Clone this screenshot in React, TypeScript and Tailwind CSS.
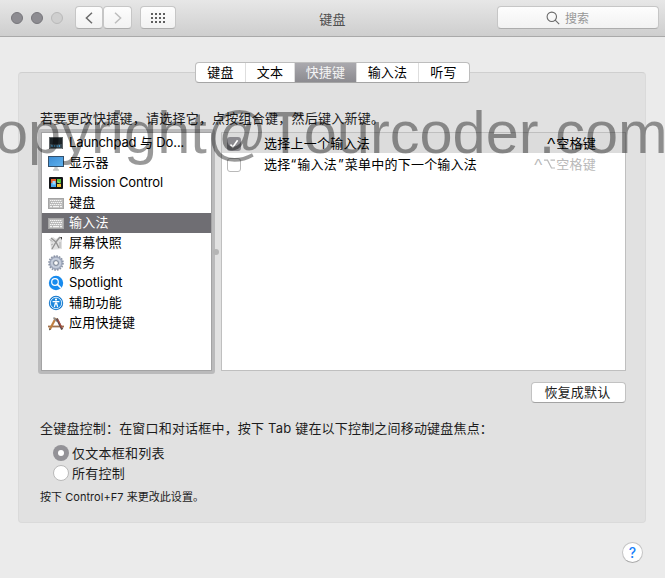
import React from "react";

function LaunchpadIcon() {
  return (
    <svg width="16" height="16" viewBox="0 0 16 16">
      <rect x="1.5" y="2.5" width="13" height="11" fill="#1d2428" stroke="#5c6164" strokeWidth="1" />
      <path d="M2 9h12v4H2z" fill="#37444c" />
      <path d="M3.5 11h9" stroke="#4fb4f0" strokeWidth="1.4" strokeDasharray="1.4 1" />
      <path d="M2 13.5h12" stroke="#8b8f91" />
    </svg>
  );
}

function DisplayIcon() {
  return (
    <svg width="16" height="16" viewBox="0 0 16 16">
      <defs>
        <linearGradient id="screen" x1="0" y1="0" x2="1" y2="1">
          <stop offset="0" stopColor="#3c8cd4" />
          <stop offset="1" stopColor="#5fb2ee" />
        </linearGradient>
      </defs>
      <rect x="0.5" y="1.5" width="15" height="10" fill="url(#screen)" stroke="#34506b" />
      <path d="M6.5 12h3l.5 2.5H6z" fill="#c9cccd" />
      <path d="M5 15h6" stroke="#a4a8aa" />
    </svg>
  );
}

function MissionIcon() {
  return (
    <svg width="16" height="16" viewBox="0 0 16 16">
      <rect x="1" y="2" width="14" height="12" rx="1" fill="#121417" />
      <rect x="3" y="4" width="5" height="4" fill="#e8602c" />
      <rect x="9" y="4" width="4" height="4" fill="#58c43a" />
      <rect x="3" y="8" width="5" height="4" fill="#48a9ee" />
      <rect x="4.5" y="6" width="3" height="3.5" fill="#9cd8fa" />
      <rect x="9" y="9" width="4" height="3" fill="#f2c230" />
      <path d="M10 6.5l2 2" stroke="#dfe9b6" />
    </svg>
  );
}

function KeyboardIcon() {
  return (
    <svg width="16" height="16" viewBox="0 0 16 16">
      <rect x="0.5" y="3.5" width="15" height="10" fill="#b9b9b9" stroke="#a6a6a6" />
      <path d="M2 5.5h12M3 7.5h11M2 9.5h12" stroke="#f4f4f4" strokeWidth="1.2" strokeDasharray="1.4 .6" />
      <path d="M2 11.7h2M5 11.7h6M12 11.7h2" stroke="#f4f4f4" strokeWidth="1.2" />
    </svg>
  );
}

function SnapshotIcon() {
  return (
    <svg width="16" height="16" viewBox="0 0 16 16">
      <path d="M2 4l3-2 3 2 3-2 3 1v11l-11 1z" fill="#e0e0e0" />
      <path d="M3 3l5 4 4-5M8 7l-4 7M8 7l3 6" fill="none" stroke="#939393" strokeWidth="1.4" />
      <path d="M12 2h2v3z" fill="#3b3b3b" />
      <path d="M1.5 4.5l3 2M3 10l2-1M12 7v6" stroke="#b0b0b0" />
    </svg>
  );
}

function GearIcon() {
  return (
    <svg width="16" height="16" viewBox="0 0 16 16">
      <circle cx="8" cy="8" r="7" fill="none" stroke="#8b95a6" strokeWidth="1.6" strokeDasharray="1.7 1.05" />
      <circle cx="8" cy="8" r="6.2" fill="#b3bdcf" stroke="#8089a0" strokeWidth=".8" />
      <circle cx="8" cy="8" r="4.2" fill="none" stroke="#d3d9e4" strokeWidth="1" />
      <circle cx="8" cy="8" r="2.4" fill="#fafafa" stroke="#6e7888" strokeWidth=".9" />
    </svg>
  );
}

function SpotlightIcon() {
  return (
    <svg width="16" height="16" viewBox="0 0 16 16">
      <circle cx="8" cy="8" r="7.2" fill="#188bee" />
      <circle cx="7" cy="7" r="3.3" fill="none" stroke="#fff" strokeWidth="1.2" />
      <path d="M9.4 9.4l3 3" stroke="#fff" strokeWidth="1.5" strokeLinecap="round" />
    </svg>
  );
}

function AccessibilityIcon() {
  return (
    <svg width="16" height="16" viewBox="0 0 16 16">
      <circle cx="8" cy="8" r="7.2" fill="#1377cc" />
      <circle cx="8" cy="8" r="5.7" fill="#1b86dc" stroke="#e9f5ff" strokeWidth=".9" />
      <circle cx="8" cy="4.6" r="1.1" fill="#fff" />
      <path d="M4.6 6.6h6.8M8 6.5v3M7.4 8l-1 4M8.6 8l1 4" stroke="#fff" strokeWidth="1.2" fill="none" />
    </svg>
  );
}

function AppsIcon() {
  return (
    <svg width="16" height="16" viewBox="0 0 16 16">
      <path d="M0 11.5h16" stroke="#a0714c" strokeWidth="1.8" />
      <path d="M1.8 14.5L7.8 3" stroke="#c08040" strokeWidth="2.2" />
      <path d="M5.5 2.5l3.5 4" stroke="#8b8e92" strokeWidth="1.6" />
      <path d="M8.8 3.5l5.4 11" stroke="#5b4a48" strokeWidth="2.2" />
      <path d="M9.8 4.5l4.3 8.5" stroke="#c9503f" strokeWidth=".9" />
      <path d="M1 15.5l.5-2 1.4.7z" fill="#3d3d3d" />
    </svg>
  );
}

const categories = [
  { label: "Launchpad 与 Do...", Icon: LaunchpadIcon, latin: true },
  { label: "显示器", Icon: DisplayIcon },
  { label: "Mission Control", Icon: MissionIcon, latin: true },
  { label: "键盘", Icon: KeyboardIcon },
  { label: "输入法", Icon: KeyboardIcon, selected: true },
  { label: "屏幕快照", Icon: SnapshotIcon },
  { label: "服务", Icon: GearIcon },
  { label: "Spotlight", Icon: SpotlightIcon, latin: true },
  { label: "辅助功能", Icon: AccessibilityIcon },
  { label: "应用快捷键", Icon: AppsIcon },
];

const tabs = [
  { label: "键盘", width: "w-[50px]" },
  { label: "文本", width: "w-[49px]" },
  { label: "快捷键", width: "w-[62px]", active: true },
  { label: "输入法", width: "w-[62px]" },
  { label: "听写", width: "w-[49px]" },
];

const toolButton =
  "flex h-[23px] items-center rounded-[4px] border border-[#c6c6c6] border-b-[#adadad] bg-linear-to-b from-[#fdfdfd] to-[#f2f2f2]";

function TitleBar() {
  return (
    <header className="flex h-[37px] items-start border-b border-[#a9a9a9] bg-linear-to-b from-[#e7e7e7] to-[#cecece] pt-[6px]">
      <div className="flex gap-2 pt-[6px] pl-[11px]">
        <span className="size-3 rounded-full border border-[#77767b] bg-[#8d8c91]" />
        <span className="size-3 rounded-full border border-[#77767b] bg-[#8d8c91]" />
        <span className="size-3 rounded-full border border-[#b9b9b9] bg-[#cfcfcf]" />
      </div>
      <div className="ml-3 flex">
        <span className={`${toolButton} w-[28px] justify-center`}>
          <svg width="8" height="12" viewBox="0 0 8 12" fill="none" stroke="#6b6b6b" strokeWidth="1.5">
            <path d="M7 .7L1.4 6 7 11.3" />
          </svg>
        </span>
        <span className={`${toolButton} w-[29px] justify-center`}>
          <svg width="8" height="12" viewBox="0 0 8 12" fill="none" stroke="#bdbdbd" strokeWidth="1.5">
            <path d="M1 .7L6.6 6 1 11.3" />
          </svg>
        </span>
      </div>
      <span className={`${toolButton} ml-[8px] w-[36px] justify-center`}>
        <svg width="14" height="10" viewBox="0 0 14 10" stroke="#5e5e5e" strokeWidth="2">
          <path d="M0 1h14M0 5h14M0 9h14" strokeDasharray="2 2" />
        </svg>
      </span>
      <h1 className="w-[313px] text-center text-[13px] leading-[26px] tracking-[0.2px] text-[#4e4e4e]">
        键盘
      </h1>
      <div className={`${toolButton} ml-[8px] w-[162px] pl-[48px]`}>
        <svg width="14" height="14" viewBox="0 0 14 14" fill="none" stroke="#6a6a6a" strokeWidth="1.1">
          <circle cx="5.8" cy="5.8" r="4.7" />
          <path d="M9.2 9.2l4 4" />
        </svg>
        <span className="ml-[5px] pt-[2px] text-[12px] tracking-normal text-[#979797]">搜索</span>
      </div>
    </header>
  );
}

function CategoryList() {
  return (
    <div className="h-[245px] w-[177px] rounded-[3px] bg-[#bababb] p-[3px]">
      <div className="h-full border border-[#a3a3a4] bg-white">
        {categories.map(({ label, Icon, selected, latin }) => (
          <div
            key={label}
            className={`flex h-5 items-center gap-[5px] pl-[6px] ${selected ? "bg-[#6f6e73] text-white" : "text-black"}`}
          >
            <Icon />
            <span className={`pb-[2px] whitespace-nowrap ${latin ? "tracking-[-0.12px]" : ""}`}>{label}</span>
          </div>
        ))}
      </div>
    </div>
  );
}

function ShortcutTable() {
  return (
    <div className="mt-[3px] h-[239px] w-[405px] border border-[#bfbfbf] bg-white text-black">
      <div className="flex h-[20px] items-center bg-[#dcdcdc] pr-[29px] pl-[5px]">
        <span className="mt-[2px] flex size-[14px] items-center justify-center rounded-[3px] bg-[#8b8a8f]">
          <svg width="10" height="10" viewBox="0 0 10 10" fill="none" stroke="#fff" strokeWidth="1.6">
            <path d="M1.5 5.5l2.3 2.7L8.6 1.3" />
          </svg>
        </span>
        <span className="ml-[23px] flex-1">选择上一个输入法</span>
        <span className="flex items-center">
          <span className="w-[10px] text-center font-['Liberation_Sans',sans-serif] text-[17px] tracking-normal">
            <span className="block h-4 leading-5">^</span>
          </span>
          空格键
        </span>
      </div>
      <div className="flex h-[22px] items-center pr-[29px] pl-[5px]">
        <span className="mt-[2px] size-[14px] rounded-[3px] border border-[#b9b9b9] bg-white" />
        <span className="ml-[23px] flex-1">
          选择<span className="tracking-[1px]">“</span>输入法<span className="ml-px tracking-[1px]">”</span>
          菜单中的下一个输入法
        </span>
        <span className="flex items-center text-[#b9b9b9]">
          <span className="w-[10px] text-center font-['Liberation_Sans',sans-serif] text-[17px] tracking-normal">
            <span className="block h-4 leading-5">^</span>
          </span>
          <svg className="mx-px" width="11" height="10" viewBox="0 0 11 10" fill="none" stroke="#b9b9b9" strokeWidth="1.2">
            <path d="M0 1.2h3.5L7.5 9H11M6.5 1.2H11" />
          </svg>
          空格键
        </span>
      </div>
    </div>
  );
}

export default function App() {
  return (
    <div className="relative h-[578px] w-[665px] overflow-hidden bg-[#ebebeb] font-[Inter,'Noto_Sans_CJK_SC',sans-serif] text-[13px] leading-5 tracking-[0.24px] text-[#1c1c1c]">
      <TitleBar />
      <nav className="relative z-10 mt-[25px] ml-[195px] flex h-[21px] w-[275px] overflow-hidden rounded-[4px] border border-[#bdbdbd] border-b-[#a5a5a5] bg-white text-black">
        {tabs.map((tab) => (
          <span
            key={tab.label}
            className={`${tab.width} flex shrink-0 items-center justify-center border-r border-[#dedede] pb-[2px] last:border-r-0 ${
              tab.active ? "bg-linear-to-b from-[#aaa9ae] to-[#8c8b90] text-[#f4f4f4]" : ""
            }`}
          >
            {tab.label}
          </span>
        ))}
      </nav>
      <main className="-mt-[11px] ml-[18px] h-[451px] w-[628px] rounded-[4px] border border-[#dadada] border-t-[#cfcfcf] bg-[#e1e1e1] pt-[35px] pl-[19px]">
        <p className="pb-px pl-[2px]">若要更改快捷键，请选择它，点按组合键，然后键入新键。</p>
        <div className="flex">
          <CategoryList />
          <div className="flex w-[6px] items-center">
            <span className="relative -left-[2px] size-[6px] shrink-0 rounded-full bg-[#b5b5b5]" />
          </div>
          <ShortcutTable />
        </div>
        <div className="mt-2 flex w-[588px] justify-end">
          <button className="h-[21px] w-[95px] rounded-[4px] border border-[#c2c2c2] border-b-[#a3a3a3] bg-white pr-[2px] text-[13px] leading-[19px] tracking-[0.24px]">
            恢复成默认
          </button>
        </div>
        <p className="mt-[15px] pl-[2px] tracking-[0.19px]">
          全键盘控制：在窗口和对话框中，按下 Tab 键在以下控制之间移动键盘焦点：
        </p>
        <div className="mt-[5px] pl-[15px]">
          <label className="flex h-5 items-center gap-[3px]">
            <span className="flex size-4 items-center justify-center rounded-full bg-[#939297]">
              <span className="size-[6px] rounded-full bg-white" />
            </span>
            仅文本框和列表
          </label>
          <label className="flex h-5 items-center gap-[3px]">
            <span className="size-4 rounded-full border border-[#b9b9b9] bg-white" />
            所有控制
          </label>
        </div>
        <p className="mt-[6px] pl-[2px] text-[11px] leading-4 tracking-[0.04px]">按下 Control+F7 来更改此设置。</p>
      </main>
      <div className="mt-[19px] flex justify-end pr-[22px]">
        <button className="size-[21px] rounded-full border border-[#c4c4c4] border-b-[#a9a9a9] bg-white text-center text-[14px] leading-[19px] font-medium text-[#1a82fb]">
          ?
        </button>
      </div>
      <div className="pointer-events-none absolute top-[98px] -left-[48px] z-20 font-['Liberation_Sans',Arial,sans-serif] text-[59.55px] leading-[69px] tracking-normal whitespace-nowrap text-black/40 [font-kerning:none]">
        Copyright@Tourcoder.com
      </div>
    </div>
  );
}
